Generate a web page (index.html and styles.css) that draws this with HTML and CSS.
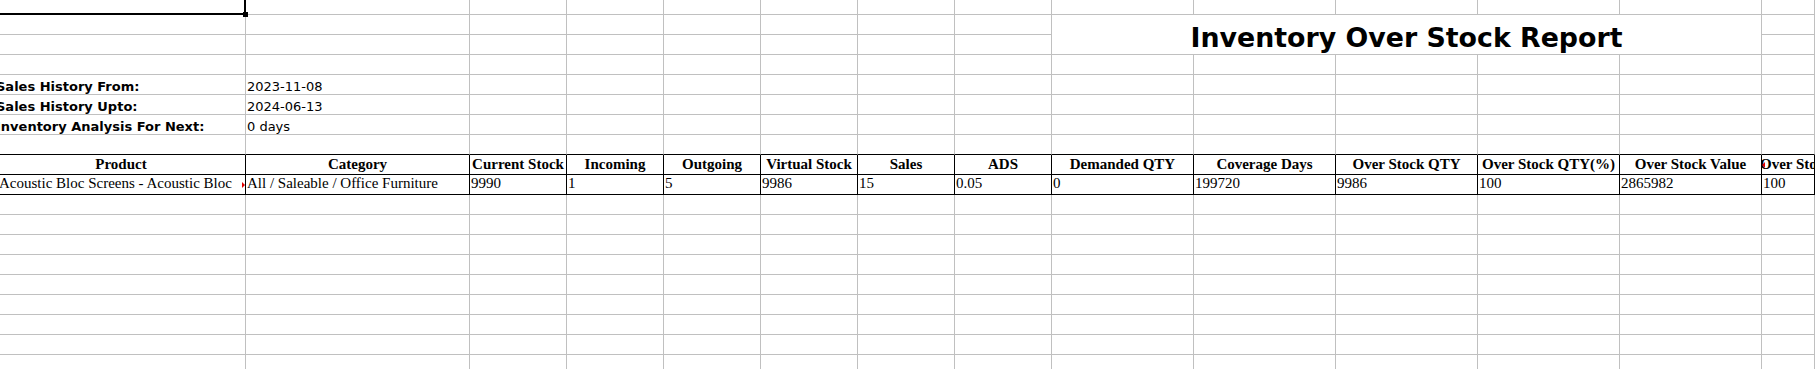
FILE: index.html
```html
<!DOCTYPE html>
<html lang="en">
<head>
<meta charset="utf-8">
<title>Inventory Over Stock Report</title>
<link rel="stylesheet" href="styles.css">
</head>
<body>
<div class="sheet">
  <!-- row 0 -->
  <div class="c sel"><span class="cursor"></span><span class="handle"></span></div>
  <div class="c"></div><div class="c"></div><div class="c"></div><div class="c"></div><div class="c"></div><div class="c"></div><div class="c"></div><div class="c"></div><div class="c"></div><div class="c"></div><div class="c"></div><div class="c"></div><div class="c"></div>
  <!-- row 1 -->
  <div class="c"></div><div class="c"></div><div class="c"></div><div class="c"></div><div class="c"></div><div class="c"></div><div class="c"></div><div class="c"></div>
  <div class="c title">Inventory Over Stock Report</div>
  <div class="c"></div>
  <!-- row 2 -->
  <div class="c"></div><div class="c"></div><div class="c"></div><div class="c"></div><div class="c"></div><div class="c"></div><div class="c"></div><div class="c"></div><div class="c"></div>
  <!-- row 3 -->
  <div class="c"></div><div class="c"></div><div class="c"></div><div class="c"></div><div class="c"></div><div class="c"></div><div class="c"></div><div class="c"></div><div class="c"></div><div class="c"></div><div class="c"></div><div class="c"></div><div class="c"></div><div class="c"></div>
  <!-- row 4 -->
  <div class="c lbl">Sales History From:</div><div class="c val">2023-11-08</div>
  <div class="c"></div><div class="c"></div><div class="c"></div><div class="c"></div><div class="c"></div><div class="c"></div><div class="c"></div><div class="c"></div><div class="c"></div><div class="c"></div><div class="c"></div><div class="c"></div>
  <!-- row 5 -->
  <div class="c lbl">Sales History Upto:</div><div class="c val">2024-06-13</div>
  <div class="c"></div><div class="c"></div><div class="c"></div><div class="c"></div><div class="c"></div><div class="c"></div><div class="c"></div><div class="c"></div><div class="c"></div><div class="c"></div><div class="c"></div><div class="c"></div>
  <!-- row 6 -->
  <div class="c lbl">Inventory Analysis For Next:</div><div class="c val">0 days</div>
  <div class="c"></div><div class="c"></div><div class="c"></div><div class="c"></div><div class="c"></div><div class="c"></div><div class="c"></div><div class="c"></div><div class="c"></div><div class="c"></div><div class="c"></div><div class="c"></div>
  <!-- row 7 -->
  <div class="c tb"></div><div class="c tb"></div><div class="c tb"></div><div class="c tb"></div><div class="c tb"></div><div class="c tb"></div><div class="c tb"></div><div class="c tb"></div><div class="c tb"></div><div class="c tb"></div><div class="c tb"></div><div class="c tb"></div><div class="c tb"></div><div class="c tb"></div>
  <!-- row 8: table header -->
  <div class="c th">Product</div>
  <div class="c th">Category</div>
  <div class="c th">Current Stock</div>
  <div class="c th">Incoming</div>
  <div class="c th">Outgoing</div>
  <div class="c th">Virtual Stock</div>
  <div class="c th">Sales</div>
  <div class="c th">ADS</div>
  <div class="c th">Demanded QTY</div>
  <div class="c th">Coverage Days</div>
  <div class="c th">Over Stock QTY</div>
  <div class="c th">Over Stock QTY(%)</div>
  <div class="c th">Over Stock Value</div>
  <div class="c th cut-left">Over Stock Value(%)<span class="flag flag-left"></span></div>
  <!-- row 9: data -->
  <div class="c td product"><span class="clip">Acoustic Bloc Screens - Acoustic Bloc Screens</span><span class="flag flag-right"></span></div>
  <div class="c td">All / Saleable / Office Furniture</div>
  <div class="c td">9990</div>
  <div class="c td">1</div>
  <div class="c td">5</div>
  <div class="c td">9986</div>
  <div class="c td">15</div>
  <div class="c td">0.05</div>
  <div class="c td">0</div>
  <div class="c td">199720</div>
  <div class="c td">9986</div>
  <div class="c td">100</div>
  <div class="c td">2865982</div>
  <div class="c td">100</div>
  <!-- rows 10-18 -->
  <div class="c"></div><div class="c"></div><div class="c"></div><div class="c"></div><div class="c"></div><div class="c"></div><div class="c"></div><div class="c"></div><div class="c"></div><div class="c"></div><div class="c"></div><div class="c"></div><div class="c"></div><div class="c"></div>
  <div class="c"></div><div class="c"></div><div class="c"></div><div class="c"></div><div class="c"></div><div class="c"></div><div class="c"></div><div class="c"></div><div class="c"></div><div class="c"></div><div class="c"></div><div class="c"></div><div class="c"></div><div class="c"></div>
  <div class="c"></div><div class="c"></div><div class="c"></div><div class="c"></div><div class="c"></div><div class="c"></div><div class="c"></div><div class="c"></div><div class="c"></div><div class="c"></div><div class="c"></div><div class="c"></div><div class="c"></div><div class="c"></div>
  <div class="c"></div><div class="c"></div><div class="c"></div><div class="c"></div><div class="c"></div><div class="c"></div><div class="c"></div><div class="c"></div><div class="c"></div><div class="c"></div><div class="c"></div><div class="c"></div><div class="c"></div><div class="c"></div>
  <div class="c"></div><div class="c"></div><div class="c"></div><div class="c"></div><div class="c"></div><div class="c"></div><div class="c"></div><div class="c"></div><div class="c"></div><div class="c"></div><div class="c"></div><div class="c"></div><div class="c"></div><div class="c"></div>
  <div class="c"></div><div class="c"></div><div class="c"></div><div class="c"></div><div class="c"></div><div class="c"></div><div class="c"></div><div class="c"></div><div class="c"></div><div class="c"></div><div class="c"></div><div class="c"></div><div class="c"></div><div class="c"></div>
  <div class="c"></div><div class="c"></div><div class="c"></div><div class="c"></div><div class="c"></div><div class="c"></div><div class="c"></div><div class="c"></div><div class="c"></div><div class="c"></div><div class="c"></div><div class="c"></div><div class="c"></div><div class="c"></div>
  <div class="c"></div><div class="c"></div><div class="c"></div><div class="c"></div><div class="c"></div><div class="c"></div><div class="c"></div><div class="c"></div><div class="c"></div><div class="c"></div><div class="c"></div><div class="c"></div><div class="c"></div><div class="c"></div>
  <div class="c"></div><div class="c"></div><div class="c"></div><div class="c"></div><div class="c"></div><div class="c"></div><div class="c"></div><div class="c"></div><div class="c"></div><div class="c"></div><div class="c"></div><div class="c"></div><div class="c"></div><div class="c"></div>
</div>
</body>
</html>
```

FILE: styles.css
```css
html, body {
  margin: 0;
  padding: 0;
  background: #ffffff;
}

body {
  width: 1816px;
  overflow: hidden;
  color: #000000;
}

.sheet {
  display: grid;
  grid-template-columns: 249px 224px repeat(6, 97px) repeat(5, 142px) 53px;
  grid-auto-rows: 20px;
  width: 1818px;
  margin: -5px 0 0 -3px;
}

.c {
  box-sizing: border-box;
  border-right: 1px solid #c0c0c0;
  border-bottom: 1px solid #c0c0c0;
  white-space: nowrap;
  overflow: hidden;
  position: relative;
}

/* selected cell cursor */
.sel {
  overflow: visible;
  z-index: 2;
}

.cursor {
  position: absolute;
  left: 0;
  top: 0;
  right: -1px;
  bottom: -1px;
  box-sizing: border-box;
  border-right: 2px solid #000000;
  border-bottom: 2px solid #000000;
}

.handle {
  position: absolute;
  width: 5px;
  height: 5px;
  right: -3px;
  bottom: -3px;
  background: #000000;
}

/* merged title cell */
.title {
  grid-column: 9 / span 5;
  grid-row: 2 / span 2;
  overflow: visible;
  text-align: center;
  font-family: "DejaVu Sans", sans-serif;
  font-weight: bold;
  font-size: 26.8px;
  line-height: 46px;
}

/* info block */
.lbl,
.val {
  font-family: "DejaVu Sans", sans-serif;
  font-size: 13px;
  line-height: 23px;
}

.lbl {
  font-weight: bold;
  text-indent: -1px;
}

.val {
  padding-left: 1px;
}

/* report table */
.tb {
  border-bottom-color: #000000;
}

.th,
.td {
  border-right-color: #000000;
  border-bottom-color: #000000;
  font-family: "Liberation Serif", "Times New Roman", serif;
  font-size: 15px;
}

.th {
  font-weight: bold;
  text-align: center;
  line-height: 18px;
}

.td {
  padding-left: 1px;
  line-height: 17px;
}

.product {
  padding-left: 2px;
}

.clip {
  display: block;
  width: 237px;
  overflow: hidden;
}

.cut-left {
  text-align: left;
  text-indent: -2px;
}

.flag {
  position: absolute;
  width: 0;
  height: 0;
  border-top: 3px solid transparent;
  border-bottom: 3px solid transparent;
}

.flag-right {
  right: 0;
  top: 7px;
  border-left: 3px solid #e00000;
}

.flag-left {
  left: 0;
  top: 7px;
  border-right: 3px solid #e00000;
}
```
